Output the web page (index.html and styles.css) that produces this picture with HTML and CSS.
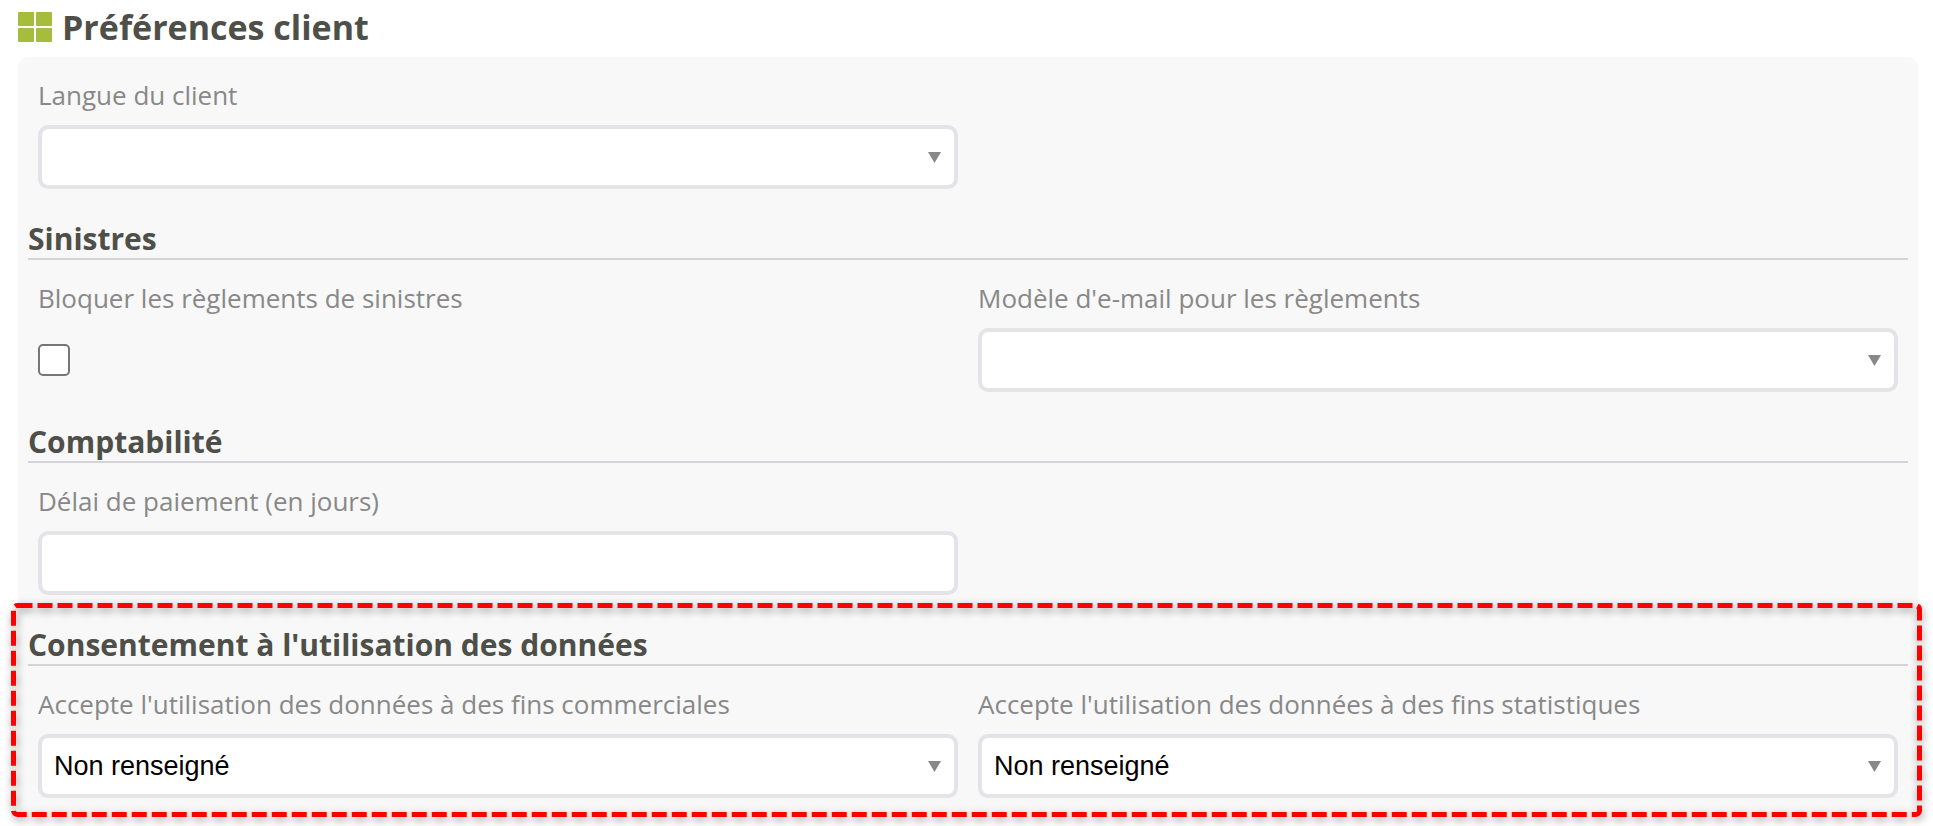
FILE: index.html
```html
<!DOCTYPE html>
<html lang="fr">
<head>
  <meta charset="UTF-8" />
  <meta name="viewport" content="width=device-width, initial-scale=1.0" />
  <title>Préférences client</title>
  <link rel="stylesheet" href="styles.css">
</head>
<body>
  <h1 class="page-title">
    <svg class="logo" viewBox="0 0 34 30" aria-hidden="true">
      <rect x="0" y="0" width="16" height="14" rx="1" />
      <rect x="18" y="0" width="16" height="14" rx="1" />
      <rect x="0" y="16" width="16" height="14" rx="1" />
      <rect x="18" y="16" width="16" height="14" rx="1" />
    </svg>
    Préférences client
  </h1>

  <form class="panel">
    <section class="group">
      <div class="row">
        <div class="field">
          <label for="langue">Langue du client</label>
          <select id="langue"><option></option></select>
        </div>
      </div>
    </section>

    <section class="group">
      <h2>Sinistres</h2>
      <div class="row">
        <div class="field">
          <label for="bloquer">Bloquer les règlements de sinistres</label>
          <div class="check"><input type="checkbox" id="bloquer"></div>
        </div>
        <div class="field">
          <label for="modele">Modèle d'e-mail pour les règlements</label>
          <select id="modele"><option></option></select>
        </div>
      </div>
    </section>

    <section class="group">
      <h2>Comptabilité</h2>
      <div class="row">
        <div class="field">
          <label for="delai">Délai de paiement (en jours)</label>
          <input type="text" id="delai">
        </div>
      </div>
    </section>

    <section class="group highlight">
      <h2>Consentement à l'utilisation des données</h2>
      <div class="row">
        <div class="field">
          <label for="commercial">Accepte l'utilisation des données à des fins commerciales</label>
          <select id="commercial">
            <option>Non renseigné</option>
            <option>Oui</option>
            <option>Non</option>
          </select>
        </div>
        <div class="field">
          <label for="statistique">Accepte l'utilisation des données à des fins statistiques</label>
          <select id="statistique">
            <option>Non renseigné</option>
            <option>Oui</option>
            <option>Non</option>
          </select>
        </div>
      </div>
      <svg class="outline" aria-hidden="true"><rect x="2.5" y="2.5" rx="4" /></svg>
    </section>
  </form>
</body>
</html>
```
FILE: styles.css
```css
* {
  box-sizing: border-box;
}

body {
  margin: 0;
  padding: 0 15px 12px 18px;
  background: #fff;
  font-family: 'Open Sans', sans-serif;
  color: #4d4f48;
}

.page-title {
  display: flex;
  align-items: center;
  gap: 10px;
  height: 57px;
  margin: 0;
  padding-bottom: 3px;
  font-size: 34px;
  line-height: 44px;
}

.logo {
  width: 34px;
  height: 30px;
  fill: #a4be3b;
}

.panel {
  padding: 18px 10px 16px;
  border-radius: 10px;
  background: #f8f8f8;
}

.group + .group {
  margin-top: 31px;
}

h2 {
  margin: 0 0 18px;
  border-bottom: 2px solid #d3d3da;
  font-size: 30px;
  line-height: 38px;
}

.row {
  display: grid;
  grid-template-columns: 1fr 1fr;
  gap: 20px;
  padding: 0 10px;
}

.field {
  display: flex;
  flex-direction: column;
  gap: 10px;
}

label {
  color: #888;
  font-size: 26px;
  line-height: 40px;
}

select,
input[type="text"] {
  width: 100%;
  height: 64px;
  padding: 0 12px;
  border: 4px solid #e3e3e8;
  border-radius: 10px;
  background-color: #fff;
  color: #000;
  font-family: 'Liberation Sans', Arial, sans-serif;
  font-size: 27px;
}

select {
  appearance: none;
  background-image: url("data:image/svg+xml,%3Csvg xmlns='http://www.w3.org/2000/svg' width='13' height='11'%3E%3Cpath d='M0 0h13L6.5 11z' fill='%23888'/%3E%3C/svg%3E");
  background-repeat: no-repeat;
  background-position: right 13px center;
}

.check {
  display: flex;
  align-items: center;
  height: 64px;
}

input[type="checkbox"] {
  appearance: none;
  width: 32px;
  height: 32px;
  margin: 0;
  border: 2px solid #767676;
  border-radius: 5px;
  background: #fff;
}

input[type="checkbox"]:checked {
  background: #767676;
}

.highlight {
  position: relative;
}

/* dashed frame drawn around the consent block */
.outline {
  position: absolute;
  top: -23px;
  left: -17px;
  width: calc(100% + 31px);
  height: calc(100% + 42px);
  overflow: visible;
  pointer-events: none;
  filter: drop-shadow(1px 3px 4px rgba(0, 0, 0, 0.4));
}

.outline rect {
  width: calc(100% - 5px);
  height: calc(100% - 5px);
  fill: none;
  stroke: #f00;
  stroke-width: 5;
  stroke-dasharray: 15 5;
}
```
